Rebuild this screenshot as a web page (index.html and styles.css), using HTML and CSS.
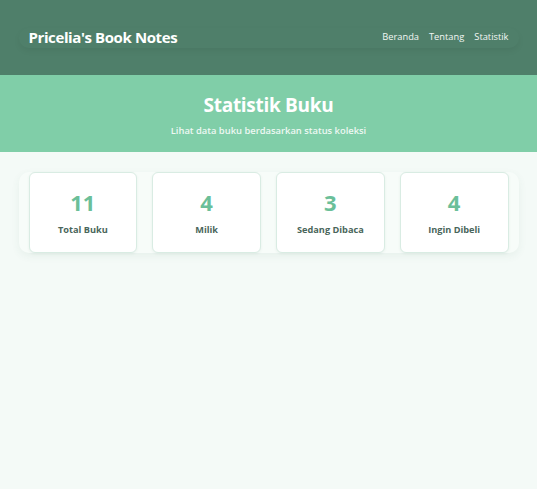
FILE: index.html
```html
<!DOCTYPE html>
<html lang="id">
<head>
<meta charset="utf-8">
<title>Statistik Buku</title>
<link rel="stylesheet" href="styles.css">
</head>
<body>
<header class="site-header">
  <div class="header-inner">
    <div class="brand">Pricelia's Book Notes</div>
    <nav class="nav">
      <a href="#">Beranda</a>
      <a href="#">Tentang</a>
      <a href="#">Statistik</a>
    </nav>
  </div>
</header>
<section class="hero">
  <h1>Statistik Buku</h1>
  <p>Lihat data buku berdasarkan status koleksi</p>
</section>
<main class="main">
  <div class="stats">
    <div class="card"><div class="num">11</div><div class="label">Total Buku</div></div>
    <div class="card"><div class="num">4</div><div class="label">Milik</div></div>
    <div class="card"><div class="num">3</div><div class="label">Sedang Dibaca</div></div>
    <div class="card"><div class="num">4</div><div class="label">Ingin Dibeli</div></div>
  </div>
</main>
</body>
</html>
```
FILE: styles.css
```css
* { box-sizing: border-box; }
html, body { margin: 0; padding: 0; }
body {
  font-family: "Open Sans", "Noto Sans", sans-serif;
  background: #f4faf7;
  min-height: 489px;
  color: #3f5f52;
}
.site-header {
  background: #4f7f6a;
  height: 75px;
  display: flex;
  align-items: center;
}
.header-inner {
  width: 500px;
  margin: 0 auto;
  display: flex;
  justify-content: space-between;
  align-items: center;
  padding: 0 10px;
  height: 20px;
  border-radius: 10px;
  box-shadow: 0 3px 6px rgba(0,0,0,0.06);
}
.brand {
  color: #fff;
  font-weight: 700;
  font-size: 15px;
  letter-spacing: -0.4px;
  margin-top: -2px;
}
.nav { display: flex; gap: 10px; margin-top: -2px; }
.nav a {
  color: #f2f7f4;
  text-decoration: none;
  font-size: 9.3px;
}
.hero {
  background: #80cea8;
  height: 77px;
  text-align: center;
  color: #fff;
  padding-top: 16px;
}
.hero h1 {
  margin: 0;
  font-size: 19px;
  font-weight: 700;
  line-height: 28px;
  letter-spacing: -0.3px;
}
.hero p {
  margin: 5px 0 0;
  font-size: 9.4px;
  font-weight: 600;
  color: #eef8f3;
}
.main { padding-top: 20px; }
.stats {
  width: 500px;
  margin: 0 auto;
  padding: 0 10px;
  display: grid;
  grid-template-columns: repeat(4, 1fr);
  gap: 15px;
  background: #f7fcf9;
  border-radius: 10px;
  box-shadow: 0 3px 8px rgba(60,110,90,0.07);
}
.card {
  background: #fff;
  border: 1px solid #d9ece3;
  border-radius: 6px;
  height: 81px;
  display: flex;
  flex-direction: column;
  align-items: center;
  padding-top: 15px;
  box-shadow: 0 1px 3px rgba(60,110,90,0.08);
}
.num {
  font-size: 22px;
  font-weight: 700;
  color: #6bbf99;
  line-height: 28px;
}
.label {
  margin-top: 7px;
  font-size: 9.2px;
  font-weight: 700;
  color: #4a665b;
}
```
